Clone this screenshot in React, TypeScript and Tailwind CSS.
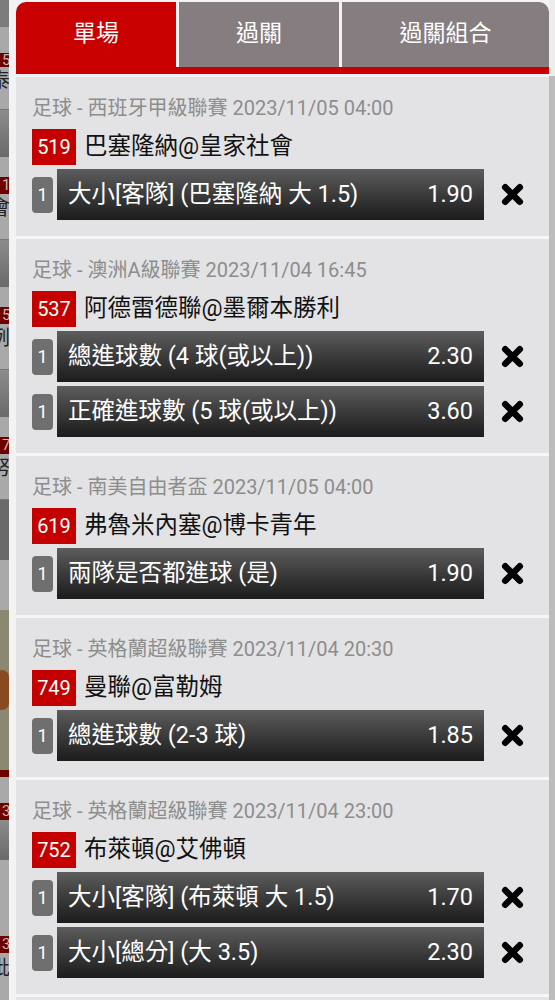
import React from "react";

type Bet = {
  league: string;
  no: string;
  match: string;
  picks: [string, string][];
};

const bets: Bet[] = [
  {
    league: "足球 - 西班牙甲級聯賽 2023/11/05 04:00",
    no: "519",
    match: "巴塞隆納@皇家社會",
    picks: [["大小[客隊] (巴塞隆納 大 1.5)", "1.90"]],
  },
  {
    league: "足球 - 澳洲A級聯賽 2023/11/04 16:45",
    no: "537",
    match: "阿德雷德聯@墨爾本勝利",
    picks: [
      ["總進球數 (4 球(或以上))", "2.30"],
      ["正確進球數 (5 球(或以上))", "3.60"],
    ],
  },
  {
    league: "足球 - 南美自由者盃 2023/11/05 04:00",
    no: "619",
    match: "弗魯米內塞@博卡青年",
    picks: [["兩隊是否都進球 (是)", "1.90"]],
  },
  {
    league: "足球 - 英格蘭超級聯賽 2023/11/04 20:30",
    no: "749",
    match: "曼聯@富勒姆",
    picks: [["總進球數 (2-3 球)", "1.85"]],
  },
  {
    league: "足球 - 英格蘭超級聯賽 2023/11/04 23:00",
    no: "752",
    match: "布萊頓@艾佛頓",
    picks: [
      ["大小[客隊] (布萊頓 大 1.5)", "1.70"],
      ["大小[總分] (大 3.5)", "2.30"],
    ],
  },
];

// 背景ページ（暗くなった一覧）の端だけ見えている部分
function BackdropStrip() {
  const Row = ({ digit, ch }: { digit: string; ch: string }) => (
    <>
      <div className="h-[47px] shrink-0 bg-linear-to-b from-[#8c8c8c] to-[#6a6a6a]" />
      <div className="h-[20px] shrink-0 bg-[#a9a9a9]" />
      <div className="h-[17px] shrink-0 bg-[#a9a9a9] flex">
        <div className="w-[9px] bg-[#6e0000] text-[15px] leading-[17px] text-[#bbb] pl-[2px]">{digit}</div>
      </div>
      <div className="h-[28px] shrink-0 bg-[#a9a9a9] text-[20px] leading-[28px] text-[#222] whitespace-nowrap -ml-[10px]">{ch}</div>
      <div className="h-[18px] shrink-0 bg-[#a9a9a9] border-b border-[#777]" />
    </>
  );
  return (
    <div className="w-[9px] shrink-0 overflow-hidden flex flex-col bg-[#a9a9a9]">
      <div className="h-[27px] shrink-0 bg-[#7c7c7c]" />
      <div className="h-[26px] shrink-0 bg-[#a9a9a9]" />
      <div className="h-[14px] shrink-0 bg-[#a9a9a9] flex">
        <div className="w-[9px] bg-[#6e0000] text-[15px] leading-[14px] text-[#bbb] pl-[2px]">5</div>
      </div>
      <div className="h-[28px] shrink-0 bg-[#a9a9a9] text-[20px] leading-[28px] text-[#222] whitespace-nowrap -ml-[10px]">泰</div>
      <div className="h-[15px] shrink-0 bg-[#a9a9a9] border-b border-[#777]" />
      <Row digit="1" ch="會" />
      <Row digit="5" ch="洌" />
      <Row digit="7" ch="努" />
      <div className="h-[60px] shrink-0 bg-[#6a6a6a]" />
      <div className="h-[50px] shrink-0 bg-[#a9a9a9]" />
      <div className="h-[160px] shrink-0 bg-[#8a8870] flex flex-col justify-center">
        <div className="h-[40px] w-[14px] -ml-[5px] rounded-full bg-[#8a4a20]" />
      </div>
      <div className="h-[7px] shrink-0 bg-[#6e0000]" />
      <div className="h-[26px] shrink-0 bg-[#a9a9a9]" />
      <div className="h-[17px] shrink-0 bg-[#a9a9a9] flex">
        <div className="w-[9px] bg-[#6e0000] text-[15px] leading-[17px] text-[#bbb] pl-[2px]">3</div>
      </div>
      <div className="h-[40px] shrink-0 bg-linear-to-b from-[#8c8c8c] to-[#6a6a6a]" />
      <div className="h-[76px] shrink-0 bg-[#a9a9a9]" />
      <div className="h-[17px] shrink-0 bg-[#a9a9a9] flex">
        <div className="w-[9px] bg-[#6e0000] text-[15px] leading-[17px] text-[#bbb] pl-[2px]">3</div>
      </div>
      <div className="h-[30px] shrink-0 bg-[#a9a9a9] text-[20px] leading-[30px] text-[#222] whitespace-nowrap -ml-[10px]">蚍</div>
    </div>
  );
}

function CloseIcon() {
  return (
    <svg viewBox="0 0 24 24" className="w-[25px] h-[25px] shrink-0">
      <path d="M5 5 L19 19 M19 5 L5 19" stroke="#000" strokeWidth="6.2" strokeLinecap="round" fill="none" />
    </svg>
  );
}

function BetSection({ bet }: { bet: Bet }) {
  return (
    <div className="shrink-0 bg-[#e3e3e5] pt-[17px] pb-[16px] pl-[16px]">
      {/* リーグ・日時 */}
      <div className="h-[28px] leading-[28px] text-[20px] text-[#8d8d8d] whitespace-nowrap">{bet.league}</div>
      {/* 試合番号 + 対戦カード */}
      <div className="mt-[7px] h-[36px] flex items-center">
        <div className="h-[36px] w-[44px] bg-[#c40000] text-white text-[20px] flex items-center justify-center">
          {bet.no}
        </div>
        <span className="ml-[8px] text-[23.5px] text-[#111] whitespace-nowrap">{bet.match}</span>
      </div>
      {/* 選択 */}
      <div className="mt-[4px] flex flex-col gap-[4px]">
        {bet.picks.map(([label, odds], i) => (
          <div key={i} className="flex items-center">
            <div className="h-[36px] w-[21px] rounded-[4px] bg-[#6f6f6f] text-white text-[18px] flex items-center justify-center">
              1
            </div>
            <div className="ml-[4px] h-[51px] w-[427px] bg-linear-to-b from-[#5d5d5d] to-[#1c1c1c] flex items-center justify-between px-[11px] text-white text-[23.5px]">
              <span className="whitespace-nowrap">{label}</span>
              <span>{odds}</span>
            </div>
            <div className="ml-[16px]">
              <CloseIcon />
            </div>
          </div>
        ))}
      </div>
    </div>
  );
}

export default function App() {
  return (
    <div className="w-[555px] h-[1000px] overflow-hidden flex bg-[#f3f3f3] font-['Roboto','Noto_Sans_CJK_TC',sans-serif]">
      <BackdropStrip />
      <div className="w-[7px] shrink-0" />
      <div className="w-[533px] shrink-0 pt-[2px] flex flex-col">
        {/* タブ */}
        <div className="shrink-0 flex gap-[3px] h-[65px]">
          <div className="w-[160px] rounded-tl-[10px] bg-[#c80000] text-white text-[23px] flex items-center justify-center">
            單場
          </div>
          <div className="w-[160px] bg-[#857d80] text-white text-[23px] flex items-center justify-center">
            過關
          </div>
          <div className="flex-1 rounded-tr-[10px] bg-[#857d80] text-white text-[23px] flex items-center justify-center">
            過關組合
          </div>
        </div>
        <div className="shrink-0 h-[7px] bg-[#c80000]" />
        <div className="shrink-0 h-[3px] bg-[#f2f2f2]" />
        <div className="shrink-0 flex flex-col gap-[3px] bg-[#f6f6f6]">
          {bets.map((b) => (
            <BetSection key={b.no} bet={b} />
          ))}
          <div className="shrink-0 h-[40px] bg-[#e3e3e5]" />
        </div>
      </div>
      <div className="flex-1 flex flex-col">
        <div className="shrink-0 h-[76px] bg-[#ededed]" />
        <div className="flex-1 bg-[#bcbcbc]" />
      </div>
    </div>
  );
}
